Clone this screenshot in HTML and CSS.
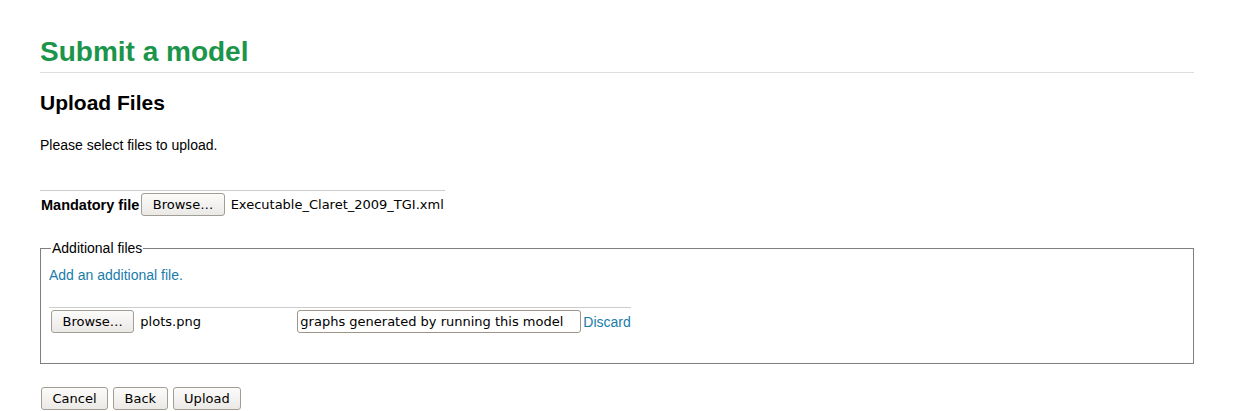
FILE: index.html
```html
<!DOCTYPE html>
<html>
<head>
<meta charset="utf-8">
<title>Submit a model</title>
<link rel="stylesheet" href="styles.css">
</head>
<body>
<div class="page">
  <h1 class="title">Submit a model</h1>
  <h2 class="subtitle">Upload Files</h2>
  <p class="intro">Please select files to upload.</p>

  <table class="mandatory">
    <tr>
      <th class="label">Mandatory file</th>
      <td><button class="btn" type="button">Browse…</button></td>
      <td class="filename">Executable_Claret_2009_TGI.xml</td>
    </tr>
  </table>

  <fieldset class="additional">
    <legend class="legend">Additional files</legend>
    <a class="link add-link" href="#">Add an additional file.</a>
    <table class="extra">
      <tr>
        <td class="cell-browse"><button class="btn" type="button">Browse…</button></td>
        <td class="filename cell-name">plots.png</td>
        <td class="cell-desc"><input class="desc" type="text" value="graphs generated by running this model"></td>
        <td class="cell-discard"><a class="link" href="#">Discard</a></td>
      </tr>
    </table>
  </fieldset>

  <div class="actions">
    <button class="btn" type="button">Cancel</button>
    <button class="btn" type="button">Back</button>
    <button class="btn" type="button">Upload</button>
  </div>
</div>
</body>
</html>
```

FILE: styles.css
```css
html, body {
  margin: 0;
  padding: 0;
  background: #ffffff;
}

body {
  font-family: "Liberation Sans", Arial, sans-serif;
  font-size: 14px;
  color: #000;
}

.page {
  padding: 0 40px;
}

.title {
  margin: 0;
  padding-top: 36px;
  padding-bottom: 4px;
  font-size: 28px;
  line-height: 32px;
  font-weight: bold;
  color: #1a954a;
  border-bottom: 1px solid #dddddd;
}

.subtitle {
  margin: 17px 0 0 0;
  font-size: 21px;
  line-height: 26px;
  font-weight: bold;
}

.intro {
  margin: 21px 0 0 0;
  line-height: 16px;
}

.mandatory {
  margin-top: 37px;
  border-collapse: collapse;
}

.mandatory td,
.mandatory th {
  border-top: 1px solid #cccccc;
  padding: 2px 1px 2px 1px;
  vertical-align: middle;
}

.label {
  font-size: 14.5px;
  font-weight: bold;
  text-align: left;
  white-space: nowrap;
}

.filename {
  font-family: "DejaVu Sans", sans-serif;
  font-size: 13px;
  padding-left: 5px !important;
}

.btn {
  font-family: "DejaVu Sans", sans-serif;
  font-size: 13px;
  line-height: 15px;
  height: 23px;
  box-sizing: border-box;
  color: #000;
  padding: 3px 10.5px;
  margin: 0;
  border: 1px solid #a39e95;
  border-radius: 3px;
  background: linear-gradient(#fbfbfa, #ebe9e6);
  cursor: pointer;
}

.additional {
  margin: 22px 0 0 0;
  padding: 6px 8px 30px 8px;
  border: 1px solid #7f7f7f;
  min-width: 0;
}

.legend {
  padding: 0 1px;
  margin-left: 2px;
  font-size: 14px;
  line-height: 16px;
}

.link {
  color: #1a7cab;
  text-decoration: none;
}

.add-link {
  display: inline-block;
  line-height: 16px;
  margin-top: 5px;
}

.extra {
  margin-top: 24px;
  border-collapse: collapse;
}

.extra td {
  border-top: 1px solid #cccccc;
  padding: 2px 0 0 0;
  vertical-align: middle;
}

.cell-browse {
  padding-left: 2px !important;
}

.cell-name {
  width: 157px;
  padding-left: 6px !important;
}

.desc {
  font-family: "DejaVu Sans", sans-serif;
  font-size: 13px;
  width: 284px;
  height: 23px;
  box-sizing: border-box;
  padding: 1px 2px;
  margin: 0;
  border: 1px solid #9e9588;
  border-radius: 3px;
  color: #000;
}

.cell-discard {
  padding-left: 2px !important;
}

.actions {
  margin-top: 23px;
  display: flex;
  gap: 5px;
  padding-left: 1px;
}
```
